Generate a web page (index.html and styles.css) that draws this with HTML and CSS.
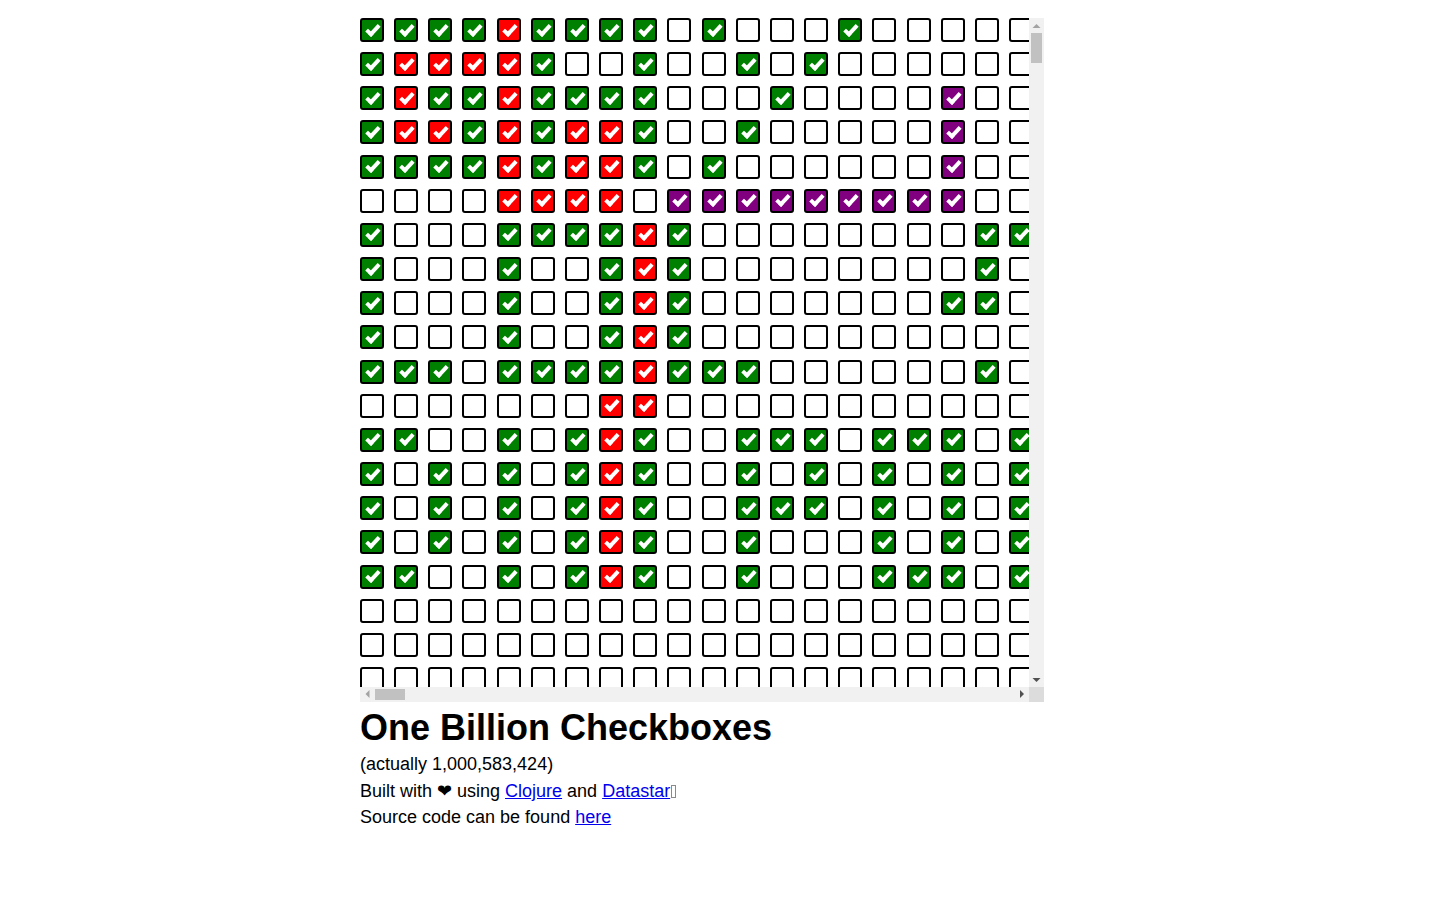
FILE: index.html
```html
<!DOCTYPE html>
<html lang="en">
<head>
<meta charset="utf-8">
<title>One Billion Checkboxes</title>
<link rel="stylesheet" href="styles.css">
</head>
<body>
<main class="page">
  <div class="board">
    <div class="viewport">
      <div class="grid">
        <i class="g"></i><i class="g"></i><i class="g"></i><i class="g"></i><i class="r"></i><i class="g"></i><i class="g"></i><i class="g"></i><i class="g"></i><i></i><i class="g"></i><i></i><i></i><i></i><i class="g"></i><i></i><i></i><i></i><i></i><i></i>
        <i class="g"></i><i class="r"></i><i class="r"></i><i class="r"></i><i class="r"></i><i class="g"></i><i></i><i></i><i class="g"></i><i></i><i></i><i class="g"></i><i></i><i class="g"></i><i></i><i></i><i></i><i></i><i></i><i></i>
        <i class="g"></i><i class="r"></i><i class="g"></i><i class="g"></i><i class="r"></i><i class="g"></i><i class="g"></i><i class="g"></i><i class="g"></i><i></i><i></i><i></i><i class="g"></i><i></i><i></i><i></i><i></i><i class="p"></i><i></i><i></i>
        <i class="g"></i><i class="r"></i><i class="r"></i><i class="g"></i><i class="r"></i><i class="g"></i><i class="r"></i><i class="r"></i><i class="g"></i><i></i><i></i><i class="g"></i><i></i><i></i><i></i><i></i><i></i><i class="p"></i><i></i><i></i>
        <i class="g"></i><i class="g"></i><i class="g"></i><i class="g"></i><i class="r"></i><i class="g"></i><i class="r"></i><i class="r"></i><i class="g"></i><i></i><i class="g"></i><i></i><i></i><i></i><i></i><i></i><i></i><i class="p"></i><i></i><i></i>
        <i></i><i></i><i></i><i></i><i class="r"></i><i class="r"></i><i class="r"></i><i class="r"></i><i></i><i class="p"></i><i class="p"></i><i class="p"></i><i class="p"></i><i class="p"></i><i class="p"></i><i class="p"></i><i class="p"></i><i class="p"></i><i></i><i></i>
        <i class="g"></i><i></i><i></i><i></i><i class="g"></i><i class="g"></i><i class="g"></i><i class="g"></i><i class="r"></i><i class="g"></i><i></i><i></i><i></i><i></i><i></i><i></i><i></i><i></i><i class="g"></i><i class="g"></i>
        <i class="g"></i><i></i><i></i><i></i><i class="g"></i><i></i><i></i><i class="g"></i><i class="r"></i><i class="g"></i><i></i><i></i><i></i><i></i><i></i><i></i><i></i><i></i><i class="g"></i><i></i>
        <i class="g"></i><i></i><i></i><i></i><i class="g"></i><i></i><i></i><i class="g"></i><i class="r"></i><i class="g"></i><i></i><i></i><i></i><i></i><i></i><i></i><i></i><i class="g"></i><i class="g"></i><i></i>
        <i class="g"></i><i></i><i></i><i></i><i class="g"></i><i></i><i></i><i class="g"></i><i class="r"></i><i class="g"></i><i></i><i></i><i></i><i></i><i></i><i></i><i></i><i></i><i></i><i></i>
        <i class="g"></i><i class="g"></i><i class="g"></i><i></i><i class="g"></i><i class="g"></i><i class="g"></i><i class="g"></i><i class="r"></i><i class="g"></i><i class="g"></i><i class="g"></i><i></i><i></i><i></i><i></i><i></i><i></i><i class="g"></i><i></i>
        <i></i><i></i><i></i><i></i><i></i><i></i><i></i><i class="r"></i><i class="r"></i><i></i><i></i><i></i><i></i><i></i><i></i><i></i><i></i><i></i><i></i><i></i>
        <i class="g"></i><i class="g"></i><i></i><i></i><i class="g"></i><i></i><i class="g"></i><i class="r"></i><i class="g"></i><i></i><i></i><i class="g"></i><i class="g"></i><i class="g"></i><i></i><i class="g"></i><i class="g"></i><i class="g"></i><i></i><i class="g"></i>
        <i class="g"></i><i></i><i class="g"></i><i></i><i class="g"></i><i></i><i class="g"></i><i class="r"></i><i class="g"></i><i></i><i></i><i class="g"></i><i></i><i class="g"></i><i></i><i class="g"></i><i></i><i class="g"></i><i></i><i class="g"></i>
        <i class="g"></i><i></i><i class="g"></i><i></i><i class="g"></i><i></i><i class="g"></i><i class="r"></i><i class="g"></i><i></i><i></i><i class="g"></i><i class="g"></i><i class="g"></i><i></i><i class="g"></i><i></i><i class="g"></i><i></i><i class="g"></i>
        <i class="g"></i><i></i><i class="g"></i><i></i><i class="g"></i><i></i><i class="g"></i><i class="r"></i><i class="g"></i><i></i><i></i><i class="g"></i><i></i><i></i><i></i><i class="g"></i><i></i><i class="g"></i><i></i><i class="g"></i>
        <i class="g"></i><i class="g"></i><i></i><i></i><i class="g"></i><i></i><i class="g"></i><i class="r"></i><i class="g"></i><i></i><i></i><i class="g"></i><i></i><i></i><i></i><i class="g"></i><i class="g"></i><i class="g"></i><i></i><i class="g"></i>
        <i></i><i></i><i></i><i></i><i></i><i></i><i></i><i></i><i></i><i></i><i></i><i></i><i></i><i></i><i></i><i></i><i></i><i></i><i></i><i></i>
        <i></i><i></i><i></i><i></i><i></i><i></i><i></i><i></i><i></i><i></i><i></i><i></i><i></i><i></i><i></i><i></i><i></i><i></i><i></i><i></i>
        <i></i><i></i><i></i><i></i><i></i><i></i><i></i><i></i><i></i><i></i><i></i><i></i><i></i><i></i><i></i><i></i><i></i><i></i><i></i><i></i>
      </div>
    </div>
    <div class="vbar">
      <span class="btn"><svg viewBox="0 0 15 15" width="15" height="15"><polygon points="3.5,10 7.5,6 11.5,10" fill="#a3a3a3"/></svg></span>
      <span class="track vtrack"><span class="thumb"></span></span>
      <span class="btn"><svg viewBox="0 0 15 15" width="15" height="15"><polygon points="3.5,6 11.5,6 7.5,10" fill="#505050"/></svg></span>
    </div>
    <div class="hbar">
      <span class="btn"><svg viewBox="0 0 15 15" width="15" height="15"><polygon points="5.5,7 9.5,3 9.5,11" fill="#a3a3a3"/></svg></span>
      <span class="track htrack"><span class="thumb"></span></span>
      <span class="btn"><svg viewBox="0 0 15 15" width="15" height="15"><polygon points="6,3 10,7 6,11" fill="#505050"/></svg></span>
    </div>
    <div class="corner"></div>
  </div>
  <h1 class="title">One Billion Checkboxes</h1>
  <p class="line">(actually 1,000,583,424)</p>
  <p class="line">Built with ❤ using <a href="#">Clojure</a> and <a href="#">Datastar</a><span class="tofu"></span></p>
  <p class="line">Source code can be found <a href="#">here</a></p>
</main>
</body>
</html>
```

FILE: styles.css
```css
html, body {
  margin: 0;
  padding: 0;
  background: #fff;
}

body {
  font-family: "Liberation Sans", Arial, sans-serif;
  color: #000;
}

.page {
  width: 720px;
  margin: 0 auto;
  padding-top: 18px;
}

.board {
  display: grid;
  grid-template-columns: 669px 15px;
  grid-template-rows: 669px 15px;
  width: 684px;
}

.viewport {
  overflow: hidden;
}

.grid {
  display: grid;
  grid-template-columns: repeat(20, 34.16px);
  grid-auto-rows: 34.16px;
}

.grid i {
  display: block;
  position: relative;
  width: 24px;
  height: 24px;
  box-sizing: border-box;
  border: 2px solid #000;
  border-radius: 3px;
  background: #fff;
}

.grid i.g { background: #008000; }
.grid i.r { background: #ff0000; }
.grid i.p { background: #800080; }

.grid i.g::after,
.grid i.r::after,
.grid i.p::after {
  content: "";
  position: absolute;
  left: 7px;
  top: 1.5px;
  width: 7.5px;
  height: 14px;
  box-sizing: border-box;
  border-right: 4px solid #fff;
  border-bottom: 4px solid #fff;
  transform: rotate(43deg);
}

/* scrollbars */
.vbar,
.hbar {
  display: flex;
  background: #f1f1f1;
}

.vbar {
  flex-direction: column;
}

.btn {
  flex: 0 0 15px;
  width: 15px;
  height: 15px;
  display: block;
}

.btn svg {
  display: block;
}

.track {
  flex: 1 1 auto;
  display: flex;
}

.vtrack {
  flex-direction: column;
  padding: 0 2px;
}

.htrack {
  padding: 2px 0;
}

.thumb {
  display: block;
  flex: 0 0 30px;
  background: #c1c1c1;
}

.corner {
  background: #dcdcdc;
}

.title {
  margin: 5px 0 0;
  font-size: 36px;
  font-weight: bold;
  line-height: normal;
}

.line {
  margin: 0;
  font-size: 18px;
  line-height: 26.5px;
}

.title + .line {
  margin-top: 2px;
}

.line a {
  color: #0000ee;
  text-decoration: underline;
}

.tofu {
  display: inline-block;
  width: 5px;
  height: 13px;
  margin-left: 1px;
  box-sizing: border-box;
  border: 1px solid #8a8a8a;
  vertical-align: -1px;
}
```
